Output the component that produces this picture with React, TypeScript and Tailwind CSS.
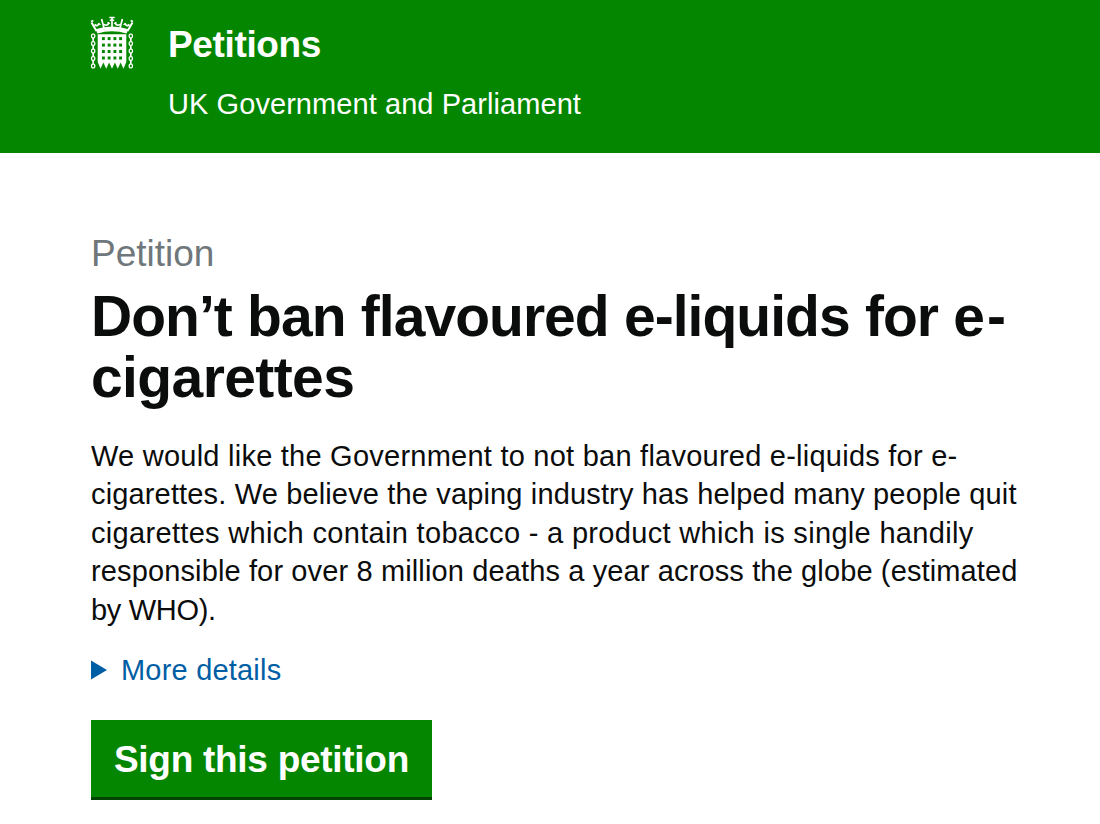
const holeColumns = [14.4, 20.1, 25.9, 31.6];
const holeRows = [23.6, 30.1, 36.5, 43];
const links = [0, 1, 2, 3, 4];

function Portcullis() {
  return (
    <svg width="46" height="56" viewBox="0 0 46 56" fill="none" stroke="#fff">
      {/* crown */}
      <path d="M6.5 14.2 Q23 8.6 39.5 14.2 L37.5 18.6 Q23 14 8.5 18.6 Z" fill="#fff" stroke="none" />
      <path d="M2.5 7.5 L7.5 16 M43.5 7.5 L38.5 16" strokeWidth="2" />
      <path d="M12.6 4 L15 13 M33.4 4 L31 13 M23 2.5 V12" strokeWidth="1.7" />
      <path d="M20.3 2.6 H25.7 M20.8 5.2 H25.2 M2 6.5 L4.4 5.5 M44 6.5 L41.6 5.5" strokeWidth="1.5" />
      <path d="M5.5 9.5 Q8 12 10.6 8.5 M15 9.5 Q18.5 11.5 20 7.5 M31 9.5 Q27.5 11.5 26 7.5 M40.5 9.5 Q38 12 35.4 8.5" strokeWidth="1.8" />
      <path d="M9 8.2 L11.5 9.7 M18.5 7.2 L21 8.8 M27.5 7.2 L25 8.8 M37 8.2 L34.5 9.7" strokeWidth="1.2" />
      {/* lattice with pointed feet */}
      <path
        d="M8.7 19.2 H37.3 V47 L34.5 53.8 L31.6 47.5 L28.8 53.8 L25.9 47.5 L23 53.8 L20.1 47.5 L17.2 53.8 L14.4 47.5 L11.5 53.8 L8.7 47 Z"
        fill="#fff"
        stroke="none"
      />
      {holeRows.map((y) =>
        holeColumns.map((x) => (
          <rect key={`${x}-${y}`} x={x - 1.45} y={y - 1.5} width="2.9" height="3" fill="#048600" stroke="none" />
        )),
      )}
      {/* side chains */}
      {links.map((i) => (
        <g key={i}>
          <rect x="2.6" y={19.2 + i * 7.5} width="3.2" height="3.6" rx="1.2" strokeWidth="1.3" />
          <rect x="40.2" y={19.2 + i * 7.5} width="3.2" height="3.6" rx="1.2" strokeWidth="1.3" />
          {i < 4 && <path d={`M4.2 ${23 + i * 7.5} v3.6 M41.8 ${23 + i * 7.5} v3.6`} strokeWidth="1.7" />}
        </g>
      ))}
    </svg>
  );
}

export default function App() {
  return (
    <div className="h-[824px] bg-white font-['Liberation_Sans',Arial,sans-serif] text-[#0b0c0c]">
      <header className="flex h-[153px] bg-[#048600] pl-[89px] text-white">
        <div className="w-[79px] pt-[15px]">
          <Portcullis />
        </div>
        <div className="whitespace-nowrap pt-[25px]">
          <div className="text-[37px] font-bold leading-[40px] tracking-[-0.35px]">Petitions</div>
          <div className="pt-[19px] text-[29px] leading-[40px] tracking-[0.07px]">UK Government and Parliament</div>
        </div>
      </header>
      <main className="whitespace-nowrap pl-[91px] pt-[80px]">
        <div className="text-[37px] leading-[42px] text-[#6f777b]">Petition</div>
        <h1 className="mt-[11px] text-[57px] font-bold leading-[61px]">
          <span className="block tracking-[-0.95px] [word-spacing:0.3px]">
            Don’t ban flavoured e-liquids for <span className="tracking-[2px]">e-</span>
          </span>
          <span className="block tracking-[-0.6px]">cigarettes</span>
        </h1>
        <p className="mt-[29px] text-[29px] leading-[38.4px]">
          <span className="block tracking-[0.24px]">We would like the Government to not ban flavoured e-liquids for e-</span>
          <span className="block tracking-[0.15px]">cigarettes. We believe the vaping industry has helped many people quit</span>
          <span className="block tracking-[0.32px]">cigarettes which contain tobacco - a product which is single handily</span>
          <span className="block tracking-[0.13px]">responsible for over 8 million deaths a year across the globe (estimated</span>
          <span className="block tracking-[-0.3px]">by WHO).</span>
        </p>
        <div className="mt-[21px] flex h-[40px] items-center text-[29px] leading-[40px] tracking-[0.2px] text-[#005ea5]">
          <svg width="17" height="20" viewBox="0 0 17 20" className="mr-[13px]">
            <path d="M0 0.5 L16 10 L0 19.5 Z" fill="#005ea5" />
          </svg>
          <span>More details</span>
        </div>
        <button className="mt-[30px] block h-[80px] w-[341px] border-b-[3px] border-[#004400] bg-[#048600] pt-[3px] text-[37px] font-bold tracking-[-0.28px] text-white">
          Sign this petition
        </button>
      </main>
    </div>
  );
}
